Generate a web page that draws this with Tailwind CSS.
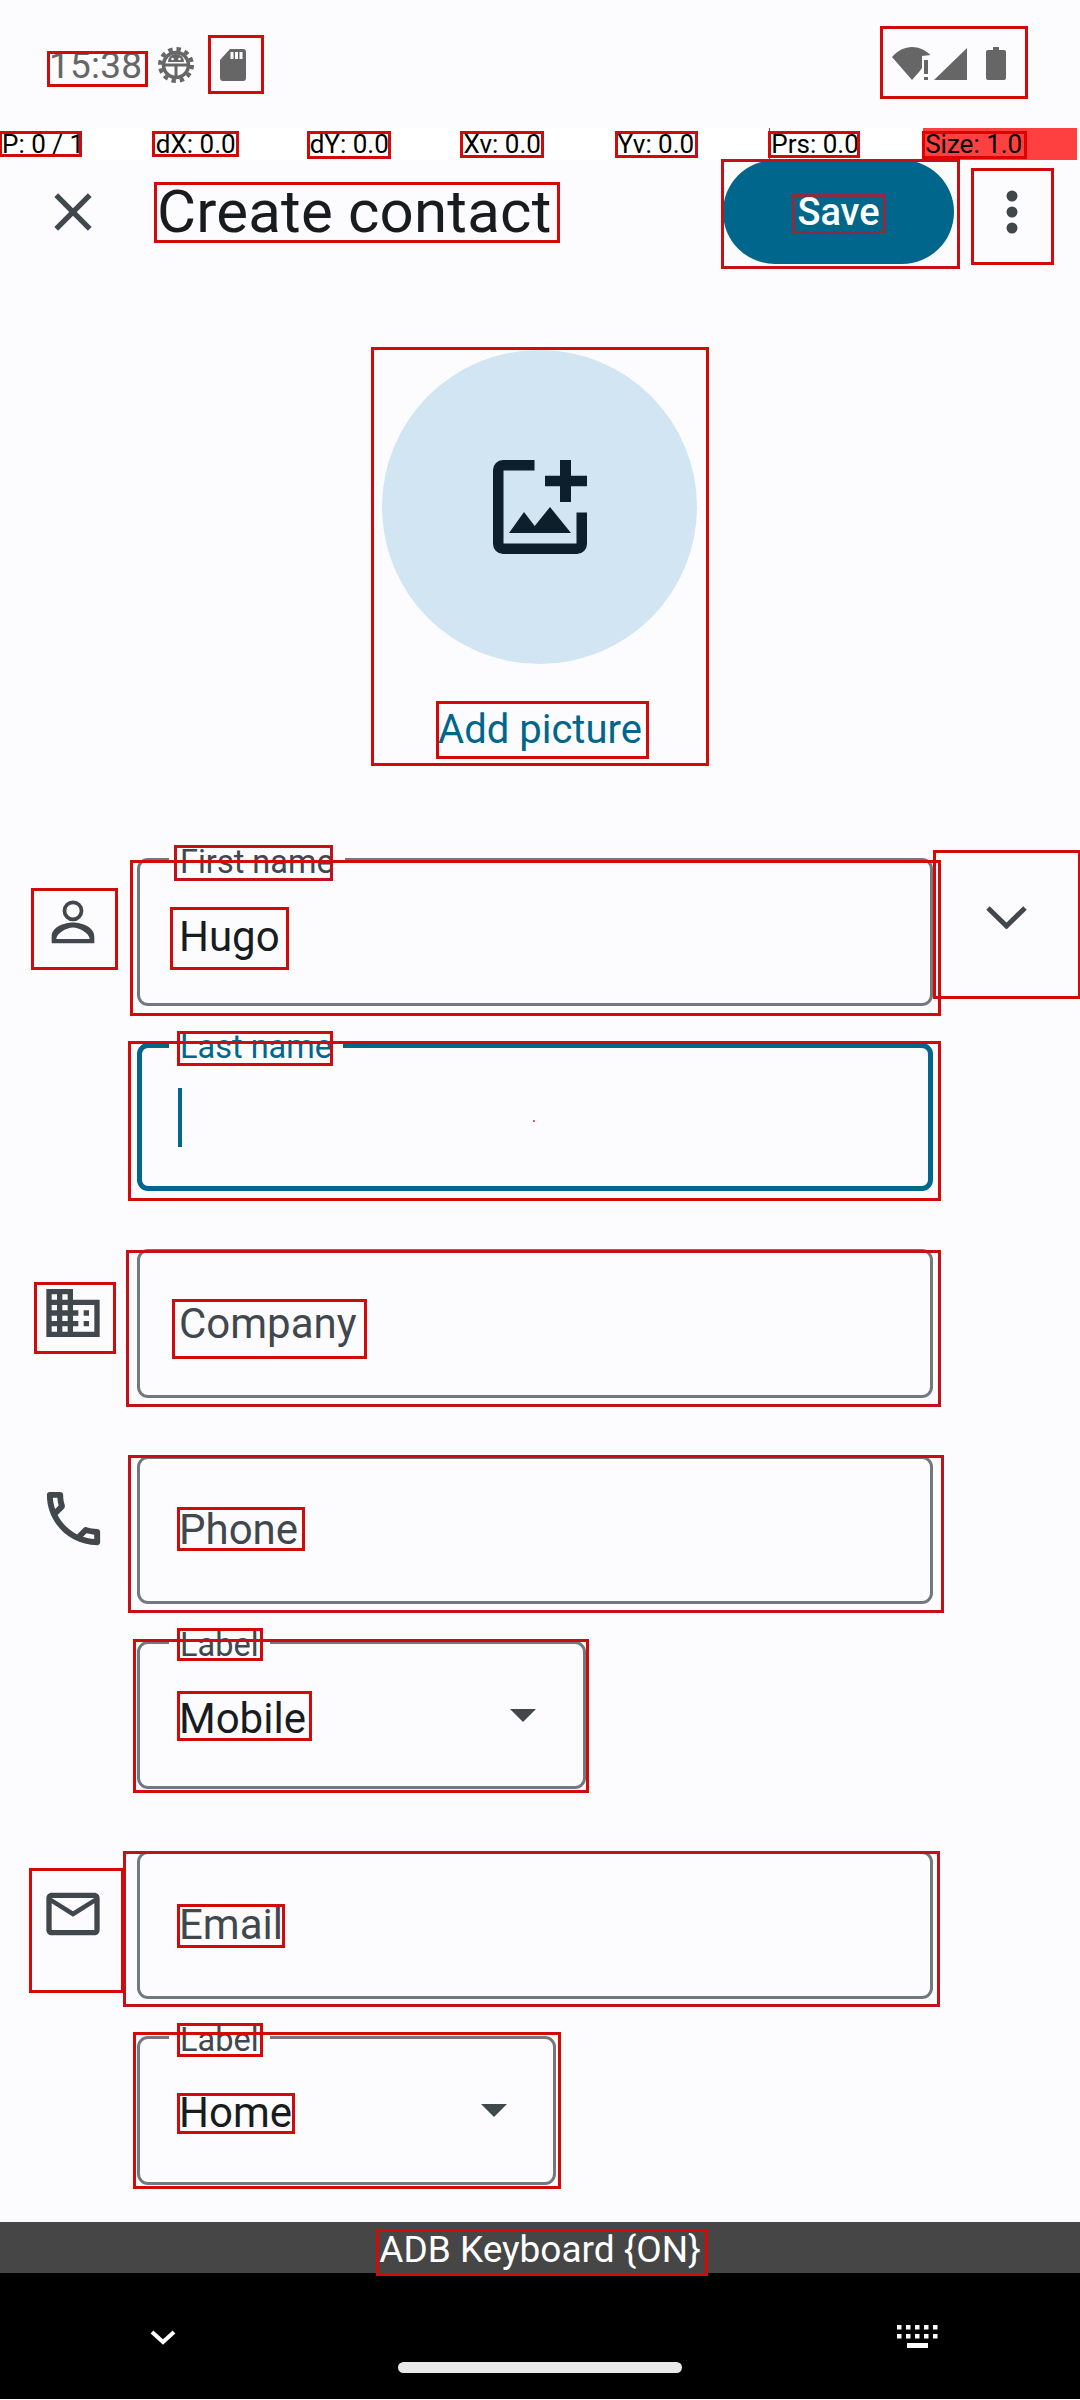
<!DOCTYPE html>
<html>
<head>
<meta charset="utf-8">
<title>Create contact</title>
<script src="https://cdn.jsdelivr.net/npm/@tailwindcss/browser@4"></script>
</head>
<body class="bg-[#fcfcff]">
<div class="relative w-[1080px] h-[2400px] overflow-hidden bg-[#fcfcff] font-['Roboto',sans-serif] text-[#191c1e]">

  <!-- status bar -->
  <div class="flex items-start h-[128px] text-[#666666]">
    <span class="ml-[49px] mt-[44px] text-[37px] leading-[44px] tracking-[0.2px]">15:38</span>
    <svg class="ml-[15px] mt-[47px] w-[38px] h-[36px]" viewBox="0 0 38 36" fill="none" stroke="#666666">
      <circle cx="19" cy="18" r="16" stroke-width="4" stroke-dasharray="4.4 3.98"/>
      <circle cx="19" cy="18" r="12.5" stroke-width="3.5"/>
      <path d="M8 18h22M19 18v12" stroke-width="3"/>
      <path d="M11 15a8 8 0 0 1 16 0z" fill="#666666" stroke="none"/>
      <circle cx="15.5" cy="12" r="1.3" fill="#fcfcff" stroke="none"/>
      <circle cx="22.5" cy="12" r="1.3" fill="#fcfcff" stroke="none"/>
    </svg>
    <svg class="ml-[25px] mt-[49px] w-[26px] h-[32px]" viewBox="0 0 26 32">
      <path fill="#666666" d="M10 0h13a3 3 0 0 1 3 3v26a3 3 0 0 1-3 3H3a3 3 0 0 1-3-3V11z"/>
      <path fill="#fcfcff" d="M10.500 3h3v7h-3zM15 3h3v7h-3zM19.500 3h3v7h-3z"/>
    </svg>
    <div class="ml-auto mr-[74px] mt-[47px] flex items-start">
      <svg class="w-[40px] h-[33px]" viewBox="0 0 40 33">
        <path fill="#666666" d="M0 10C5.500 3.500 13 0 20 0c7 0 13.500 3 18.500 8L30 9v12l-3 4-7 8z"/>
        <path fill="#666666" d="M32 13h4v14h-4zM32 30h4v3h-4z"/>
      </svg>
      <svg class="ml-[2px] mt-[1px] w-[33px] h-[32px]" viewBox="0 0 33 32"><path fill="#666666" d="M0 32h33V0z"/></svg>
      <svg class="ml-[19px] w-[20px] h-[33px]" viewBox="0 0 20 33"><path fill="#666666" d="M7 0h6v3h5a2 2 0 0 1 2 2v26a2 2 0 0 1-2 2H2a2 2 0 0 1-2-2V5a2 2 0 0 1 2-2h5z"/></svg>
    </div>
  </div>

  <!-- pointer location bar -->
  <div class="grid grid-cols-7 w-[1077px] h-[32px] bg-white text-black text-[26px] leading-[32px]">
    <div class="pl-[2px]">P: 0 / 1</div>
    <div class="pl-[2px]">dX: 0.0</div>
    <div class="pl-[2px]">dY: 0.0</div>
    <div class="pl-[2px]">Xv: 0.0</div>
    <div class="pl-[2px]">Yv: 0.0</div>
    <div class="pl-[2px]">Prs: 0.0</div>
    <div class="pl-[2px] bg-[#ff4040]">Size: 1.0</div>
  </div>

  <!-- header -->
  <header class="flex items-center h-[104px]">
    <svg class="ml-[41px] w-[64px] h-[64px]" viewBox="0 0 24 24"><path fill="#41484d" d="M19 6.410L17.590 5 12 10.590 6.410 5 5 6.410 10.590 12 5 17.590 6.410 19 12 13.410 17.590 19 19 17.590 13.410 12z"/></svg>
    <h1 class="ml-[52px] text-[60px] leading-[70px] tracking-[0.2px]">Create contact</h1>
    <button class="ml-auto w-[231px] h-[104px] rounded-full bg-[#00668b] text-white text-[38px] font-medium leading-[44px]">Save</button>
    <svg class="ml-[26px] mr-[36px] w-[64px] h-[64px]" viewBox="0 0 64 64">
      <circle cx="32" cy="16" r="5.500" fill="#41484d"/><circle cx="32" cy="32" r="5.500" fill="#41484d"/><circle cx="32" cy="48" r="5.500" fill="#41484d"/>
    </svg>
  </header>

  <!-- picture -->
  <div class="flex flex-col items-center mt-[86px]">
    <div class="flex items-center justify-center w-[315px] h-[314px] rounded-full bg-[#d2e5f3] ml-[-1px]">
      <svg class="w-[94px] h-[94px] mr-[-1px] mt-[-1px]" viewBox="0 0 94 94">
        <path fill="#0c1f2b" d="M41.500 0H10A10 10 0 0 0 0 10v74a10 10 0 0 0 10 10h74a10 10 0 0 0 10-10V52.500H83.500v31h-73v-73h31z"/>
        <path fill="#0c1f2b" d="M67 0h11v15.700h16v10.600H78V42H67V26.300H52V15.700h15zM16 73l15-21 10.700 14L57 47l21 26z"/>
      </svg>
    </div>
    <span class="mt-[38px] h-[56px] text-[40px] leading-[56px] text-[#00668b]">Add picture</span>
  </div>

  <!-- name -->
  <div class="flex items-start mt-[100px]">
    <svg class="ml-[41px] mt-[32px] w-[64px] h-[64px]" viewBox="0 0 24 24"><path fill="#41484d" fill-rule="evenodd" d="M12 3.900a3.900 3.900 0 1 1 0 7.800 3.900 3.900 0 0 1 0-7.800zm0 1.400a2.500 2.500 0 1 0 0 5 2.500 2.500 0 0 0 0-5zM4 20v-2.500C4 14 8.500 12.200 12 12.200s8 1.800 8 5.300V20zm1.700-1.600h12.600c-.3-2.300-4-4.300-6.300-4.300s-6 2-6.300 4.300z"/></svg>
    <div class="relative ml-[32px] w-[796px] h-[148px] rounded-[11px] border-[3px] border-[#71787e]">
      <span class="absolute left-[29px] top-[-17px] px-[11px] bg-[#fcfcff] text-[32.5px] leading-[36px] text-[#41484d]">First name</span>
      <div class="pl-[39px] pt-[51px] text-[42px] leading-[50px]">Hugo</div>
    </div>
    <svg class="ml-[53px] mt-[47px] w-[41px] h-[24px]" viewBox="0 0 41 24" fill="none"><path d="M2 3l18.500 18L39 3" stroke="#41484d" stroke-width="5"/></svg>
  </div>
  <div class="flex items-start mt-[37px]">
    <div class="relative ml-[137px] w-[796px] h-[148px] rounded-[11px] border-[5px] border-[#00668b]">
      <span class="absolute left-[27px] top-[-19px] px-[11px] bg-[#fcfcff] text-[32.5px] leading-[36px] text-[#00668b]">Last name</span>
      <div class="ml-[36px] mt-[40px] w-[4px] h-[59px] bg-[#00668b]"></div>
    </div>
  </div>

  <!-- company -->
  <div class="flex items-start mt-[58px]">
    <svg class="ml-[41px] mt-[32px] w-[64px] h-[64px]" viewBox="0 0 24 24"><path fill="#41484d" d="M12 7V3H2v18h20V7H12zM6 19H4v-2h2v2zm0-4H4v-2h2v2zm0-4H4V9h2v2zm0-4H4V5h2v2zm4 12H8v-2h2v2zm0-4H8v-2h2v2zm0-4H8V9h2v2zm0-4H8V5h2v2zm10 12h-8v-2h2v-2h-2v-2h2v-2h-2V9h8v10zm-2-8h-2v2h2v-2zm0 4h-2v2h2v-2z"/></svg>
    <div class="ml-[32px] w-[796px] h-[149px] rounded-[11px] border-[3px] border-[#71787e] pl-[39px] pt-[47px] text-[42px] leading-[50px] text-[#41484d]">Company</div>
  </div>

  <!-- phone -->
  <div class="flex items-start mt-[58px]">
    <svg class="ml-[38px] mt-[27px] w-[71px] h-[71px]" viewBox="0 0 24 24"><path fill="#41484d" d="M6.540 5c.06.89.21 1.760.45 2.590l-1.200 1.200c-.41-1.200-.67-2.470-.76-3.790h1.510m9.860 12.020c.85.24 1.720.39 2.600.45v1.490c-1.320-.09-2.590-.35-3.800-.75l1.200-1.190M7.500 3H4c-.55 0-1 .45-1 1 0 9.390 7.610 17 17 17 .55 0 1-.45 1-1v-3.490c0-.55-.45-1-1-1-1.240 0-2.450-.2-3.570-.57-.1-.04-.21-.05-.31-.05-.26 0-.51.1-.71.29l-2.200 2.200c-2.830-1.450-5.150-3.760-6.590-6.590l2.200-2.200c.28-.28.36-.67.25-1.020C8.700 6.450 8.500 5.250 8.500 4c0-.55-.45-1-1-1z"/></svg>
    <div class="ml-[28px] w-[796px] h-[148px] rounded-[11px] border-[3px] border-[#71787e] pl-[39px] pt-[46px] text-[42px] leading-[50px] text-[#41484d]">Phone</div>
  </div>
  <div class="relative flex items-center justify-between ml-[137px] mt-[37px] w-[449px] h-[148px] rounded-[11px] border-[3px] border-[#71787e] pl-[39px] pr-[47px]">
    <span class="absolute left-[29px] top-[-17px] px-[11px] bg-[#fcfcff] text-[32.5px] leading-[36px] text-[#41484d]">Label</span>
    <span class="mt-[8px] text-[42px] leading-[50px]">Mobile</span>
    <svg class="w-[26px] h-[13px]" viewBox="0 0 26 13"><path fill="#41484d" d="M0 0h26L13 13z"/></svg>
  </div>

  <!-- email -->
  <div class="flex items-start mt-[62px]">
    <svg class="ml-[41px] mt-[31px] w-[64px] h-[64px]" viewBox="0 0 24 24"><path fill="#41484d" d="M22 6c0-1.100-.9-2-2-2H4c-1.100 0-2 .9-2 2v12c0 1.100.9 2 2 2h16c1.100 0 2-.9 2-2V6zm-2 0l-8 5-8-5h16zm0 12H4V8l8 5 8-5v10z"/></svg>
    <div class="ml-[32px] w-[796px] h-[148px] rounded-[11px] border-[3px] border-[#71787e] pl-[39px] pt-[46px] text-[42px] leading-[50px] text-[#41484d]">Email</div>
  </div>
  <div class="relative flex items-center justify-between ml-[137px] mt-[37px] w-[419px] h-[149px] rounded-[11px] border-[3px] border-[#71787e] pl-[39px] pr-[46px]">
    <span class="absolute left-[29px] top-[-17px] px-[11px] bg-[#fcfcff] text-[32.5px] leading-[36px] text-[#41484d]">Label</span>
    <span class="mt-[4px] text-[42px] leading-[50px]">Home</span>
    <svg class="w-[26px] h-[13px]" viewBox="0 0 26 13"><path fill="#41484d" d="M0 0h26L13 13z"/></svg>
  </div>

  <!-- keyboard strip and navigation -->
  <div class="flex items-center justify-center mt-[37px] h-[51px] pt-[5px] bg-[#464646] text-white text-[37px] leading-[46px]">ADB Keyboard {ON}</div>
  <div class="h-[126px] bg-black pt-[52px]">
    <div class="flex items-center justify-between h-[23px] pl-[150px] pr-[142px]">
      <svg class="w-[26px] h-[16px]" viewBox="0 0 26 16" fill="none"><path d="M2 3l11 10L24 3" stroke="#ffffff" stroke-width="4"/></svg>
      <svg class="w-[41px] h-[23px]" viewBox="0 0 41 23" fill="#ffffff">
        <path d="M0 0h4.500v4.500H0zM9 0h4.500v4.500H9zM18 0h4.500v4.500H18zM27 0h4.500v4.500H27zM36 0h4.500v4.500H36zM0 9h4.500v4.500H0zM9 9h4.500v4.500H9zM18 9h4.500v4.500H18zM27 9h4.500v4.500H27zM36 9h4.500v4.500H36zM10 18h21v5H10z"/>
      </svg>
    </div>
    <div class="mx-auto mt-[14px] w-[284px] h-[11px] rounded-full bg-[#e8e8e8]"></div>
  </div>

  <!-- element bounds drawn over the capture -->
  <div class="absolute left-0 top-0 w-[1080px] h-[2400px] pointer-events-none">
    <div class="absolute left-[47px] top-[51px] w-[101px] h-[36px] border-[3px] border-[#d20a0a]"></div>
    <div class="absolute left-[208px] top-[35px] w-[56px] h-[59px] border-[3px] border-[#d20a0a]"></div>
    <div class="absolute left-[880px] top-[26px] w-[148px] h-[73px] border-[3px] border-[#d20a0a]"></div>
    <div class="absolute left-[-1px] top-[131px] w-[83px] h-[26px] border-[3px] border-[#d20a0a]"></div>
    <div class="absolute left-[152px] top-[131px] w-[87px] h-[26px] border-[3px] border-[#d20a0a]"></div>
    <div class="absolute left-[307px] top-[131px] w-[84px] h-[28px] border-[3px] border-[#d20a0a]"></div>
    <div class="absolute left-[460px] top-[131px] w-[84px] h-[27px] border-[3px] border-[#d20a0a]"></div>
    <div class="absolute left-[615px] top-[131px] w-[83px] h-[27px] border-[3px] border-[#d20a0a]"></div>
    <div class="absolute left-[769px] top-[128px] w-[1px] h-[32px] bg-[#cc2222]"></div>
    <div class="absolute left-[768px] top-[131px] w-[92px] h-[27px] border-[3px] border-[#d20a0a]"></div>
    <div class="absolute left-[922px] top-[131px] w-[105px] h-[28px] border-[3px] border-[#e00000]"></div>
    <div class="absolute left-[154px] top-[182px] w-[406px] h-[61px] border-[3px] border-[#d20a0a]"></div>
    <div class="absolute left-[721px] top-[159px] w-[239px] h-[110px] border-[3px] border-[#c41018]"></div>
    <div class="absolute left-[792px] top-[194px] w-[94px] h-[40px] border-[3px] border-[#8f2b40]"></div>
    <div class="absolute left-[971px] top-[168px] w-[83px] h-[97px] border-[3px] border-[#d20a0a]"></div>
    <div class="absolute left-[371px] top-[347px] w-[338px] h-[419px] border-[3px] border-[#d20a0a]"></div>
    <div class="absolute left-[436px] top-[701px] w-[213px] h-[58px] border-[3px] border-[#d20a0a]"></div>
    <div class="absolute left-[130px] top-[860px] w-[811px] h-[156px] border-[3px] border-[#d20a0a]"></div>
    <div class="absolute left-[174px] top-[845px] w-[159px] h-[36px] border-[3px] border-[#c41018]"></div>
    <div class="absolute left-[170px] top-[907px] w-[119px] h-[63px] border-[3px] border-[#d20a0a]"></div>
    <div class="absolute left-[31px] top-[888px] w-[87px] h-[82px] border-[3px] border-[#d20a0a]"></div>
    <div class="absolute left-[933px] top-[850px] w-[148px] h-[149px] border-[3px] border-[#d20a0a]"></div>
    <div class="absolute left-[128px] top-[1041px] w-[813px] h-[160px] border-[3px] border-[#d20a0a]"></div>
    <div class="absolute left-[177px] top-[1031px] w-[156px] h-[35px] border-[3px] border-[#d20a0a]"></div>
    <div class="absolute left-[533px] top-[1120px] w-[2px] h-[2px] bg-[#e06060]"></div>
    <div class="absolute left-[126px] top-[1250px] w-[815px] h-[157px] border-[3px] border-[#c41018]"></div>
    <div class="absolute left-[172px] top-[1299px] w-[195px] h-[60px] border-[3px] border-[#d20a0a]"></div>
    <div class="absolute left-[34px] top-[1282px] w-[82px] h-[72px] border-[3px] border-[#d20a0a]"></div>
    <div class="absolute left-[128px] top-[1455px] w-[816px] h-[158px] border-[3px] border-[#c41018]"></div>
    <div class="absolute left-[177px] top-[1507px] w-[128px] h-[44px] border-[3px] border-[#d20a0a]"></div>
    <div class="absolute left-[133px] top-[1639px] w-[456px] h-[154px] border-[3px] border-[#d20a0a]"></div>
    <div class="absolute left-[177px] top-[1628px] w-[86px] h-[33px] border-[3px] border-[#d20a0a]"></div>
    <div class="absolute left-[177px] top-[1691px] w-[135px] h-[50px] border-[3px] border-[#d20a0a]"></div>
    <div class="absolute left-[123px] top-[1851px] w-[817px] h-[156px] border-[3px] border-[#c41018]"></div>
    <div class="absolute left-[177px] top-[1904px] w-[108px] h-[44px] border-[3px] border-[#d20a0a]"></div>
    <div class="absolute left-[29px] top-[1868px] w-[95px] h-[125px] border-[3px] border-[#d20a0a]"></div>
    <div class="absolute left-[133px] top-[2032px] w-[428px] h-[157px] border-[3px] border-[#d20a0a]"></div>
    <div class="absolute left-[177px] top-[2023px] w-[86px] h-[34px] border-[3px] border-[#d20a0a]"></div>
    <div class="absolute left-[177px] top-[2093px] w-[118px] h-[41px] border-[3px] border-[#d20a0a]"></div>
    <div class="absolute left-[376px] top-[2229px] w-[332px] h-[47px] border-[3px] border-[#d20a0a]"></div>
  </div>
</div>
</body>
</html>
